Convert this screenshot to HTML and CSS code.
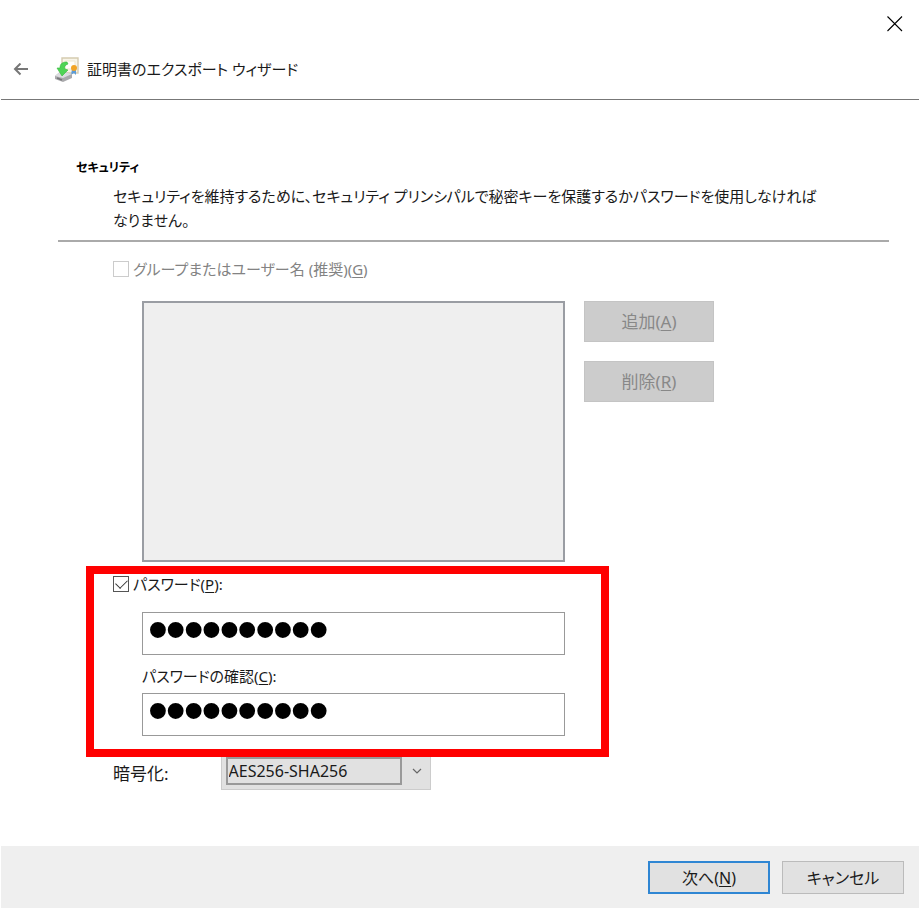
FILE: index.html
```html
<!DOCTYPE html>
<html lang="ja">
<head>
    <meta charset="UTF-8">
    <meta name="viewport" content="width=device-width, initial-scale=1.0">
    <title>証明書のエクスポート ウィザード</title>
    <link rel="stylesheet" href="styles.css">
</head>
<body>
    <div class="wizard">
        <header class="header">
            <div class="titleBar">
                <button type="button" class="closeButton" aria-label="閉じる">
                    <svg width="16" height="16" viewBox="0 0 16 16"><path d="M.5 .5L15 15M15 .5L.5 15" fill="none" stroke="#000" stroke-width="1.1"/></svg>
                </button>
            </div>
            <div class="caption">
                <button type="button" class="backButton" aria-label="戻る">
                    <svg width="16" height="14" viewBox="0 0 16 14"><path d="M15 6H2M7.5 .5L2 6L7.5 11.5" fill="none" stroke="#777" stroke-width="2"/></svg>
                </button>
                <!-- 証明書アイコン -->
                <svg class="icon" width="26" height="26" viewBox="0 0 26 26">
                    <path d="M8 1H24V16H8Z" fill="#f8f5e9" stroke="#d5cbb0" stroke-width="1.4"/>
                    <path d="M11 4H21V12H11Z" fill="#fffefa" stroke="#eee7d2"/>
                    <path d="M18 12L17 18L20 16L22 18L22 12Z" fill="#5b9bd8"/>
                    <circle cx="20" cy="11" r="3" fill="#f2a425"/>
                    <path d="M1 19L7 14L18 17L18 21L9 25L1 22Z" fill="#a9a9ac"/>
                    <path d="M1 19L7 14L18 17L9 21Z" fill="#dcdcdf"/>
                    <path d="M3 21L8 23" stroke="#77777a" stroke-width="1.5"/>
                    <path d="M13 5C8 5 6 7 6 11L3 11L8 19L14 13L11 12C10 10 11 8 14 7Z" fill="#4fd455" stroke="#35b83d" stroke-width=".6"/>
                </svg>
                <h1 class="title">証明書のエクスポート ウィザード</h1>
            </div>
        </header>

        <main class="content">
            <div class="intro">
                <h2>セキュリティ</h2>
                <p>セキュリティを維持するために、セキュリティ プリンシパルで秘密キーを保護するかパスワードを使用しなければ<br>なりません。</p>
            </div>

            <form class="form" id="exportForm">
                <div class="checkRow disabled">
                    <input type="checkbox" id="useGroup" disabled>
                    <label for="useGroup">グループまたはユーザー名 (推奨)(<u>G</u>)</label>
                </div>
                <div class="groupArea">
                    <select class="groupList" size="8" aria-label="グループまたはユーザー名" disabled></select>
                    <div class="groupButtons">
                        <button type="button" disabled>追加(<u>A</u>)</button>
                        <button type="button" disabled>削除(<u>R</u>)</button>
                    </div>
                </div>

                <div class="passwordArea">
                    <div class="checkRow">
                        <input type="checkbox" id="usePassword" checked>
                        <label for="usePassword">パスワード(<u>P</u>):</label>
                    </div>
                    <div class="fields">
                        <input type="password" class="password" aria-label="パスワード" value="0123456789">
                        <label for="confirm">パスワードの確認(<u>C</u>):</label>
                        <input type="password" class="password" id="confirm" value="0123456789">
                    </div>
                </div>

                <div class="cipherRow">
                    <label for="cipher">暗号化:</label>
                    <div class="selectBox">
                        <select id="cipher">
                            <option>AES256-SHA256</option>
                            <option>TripleDES-SHA1</option>
                        </select>
                        <svg class="arrow" width="10" height="6" viewBox="0 0 10 6"><path d="M1 1L5 5L9 1" fill="none" stroke="#666" stroke-width="1.2"/></svg>
                    </div>
                </div>
            </form>
        </main>

        <footer class="footer">
            <button type="submit" form="exportForm" class="next">次へ(<u>N</u>)</button>
            <button type="button">キャンセル</button>
        </footer>
    </div>
</body>
</html>
```
FILE: styles.css
```css
* {
    box-sizing: border-box;
}

body {
    margin: 0;
    background-color: #fff;
    color: #1a1a1a;
    font-family: "Noto Sans", "Noto Sans CJK JP", sans-serif;
    font-size: 15px;
    line-height: 24px;
    font-feature-settings: "palt";
}

button, input, select {
    font: inherit;
    color: inherit;
    font-feature-settings: inherit;
    margin: 0;
}

u {
    text-underline-offset: 2px;
    text-decoration-thickness: 1px;
}

.wizard {
    display: flex;
    flex-direction: column;
    min-height: 100vh;
    padding: 0 1px 1px;
}

.header {
    border-bottom: 1px solid #777;
}

.titleBar {
    display: flex;
    justify-content: flex-end;
    padding: 16px 16px 0;
}

.closeButton, .backButton {
    display: flex;
    padding: 0;
    border: none;
    background: none;
}

.caption {
    display: flex;
    align-items: center;
    padding: 24px 12px 16px;
}

.icon {
    margin: 0 7px 0 25px;
}

.title {
    margin: 0;
    font-size: 15px;
    font-weight: 400;
    line-height: 27px;
}

.content {
    flex: 1;
    padding: 56px 30px 0 57px;
}

.intro {
    padding: 0 18px 8px;
    border-bottom: 2px solid #aaa;
}

.intro h2 {
    margin: 0 0 4px;
    font-size: 12px;
    font-weight: 700;
    color: #000;
}

.intro p {
    margin: 0 0 0 37px;
}

.form {
    padding: 15px 0 0 55px;
}

.checkRow {
    display: flex;
    align-items: center;
    gap: 4px;
}

.checkRow input {
    appearance: none;
    display: grid;
    place-items: center;
    width: 16px;
    height: 16px;
    border: 1px solid #555;
    background-color: #fff;
}

.checkRow input:checked::before {
    content: "";
    width: 10px;
    height: 6px;
    margin-bottom: 3px;
    border: solid #333;
    border-width: 0 0 1px 1px;
    transform: rotate(-45deg);
}

.disabled {
    color: #838383;
}

.disabled input {
    border-color: #ccc;
}

.groupArea {
    display: flex;
    gap: 19px;
    padding: 20px 0 0 29px;
}

.groupList {
    width: 423px;
    height: 261px;
    border: 2px solid #9a9da3;
    border-radius: 0;
    background-color: #efefef;
    opacity: 1;
}

.groupButtons {
    display: flex;
    flex-direction: column;
    gap: 19px;
}

.groupButtons button {
    width: 130px;
    height: 41px;
    border: 1px solid #c4c4c4;
    background-color: #ccc;
    color: #888;
    font-size: 17px;
}

/* 赤枠 */
.passwordArea {
    position: relative;
    padding: 10px 0 21px;
    width: 452px;
}

.passwordArea::after {
    content: "";
    position: absolute;
    top: 4px;
    right: -44px;
    bottom: 0;
    left: -27px;
    border: 8px solid #f00;
    pointer-events: none;
    z-index: 1;
}

.fields {
    display: flex;
    flex-direction: column;
    padding: 16px 0 0 29px;
}

.fields label {
    margin: 9px 0 5px;
}

.password {
    height: 43px;
    padding: 0 6px 8px;
    border: 1px solid #999;
    background-color: #fff;
    color: #000;
    font-family: "Liberation Sans", sans-serif;
    font-size: 51px;
    -webkit-text-stroke: 2px #000;
}

.cipherRow {
    display: flex;
    align-items: center;
    gap: 52px;
    font-size: 17px;
}

.selectBox {
    display: flex;
    align-items: center;
    gap: 10px;
    padding: 0 8px 4px 4px;
    border: 1px solid #ccc;
    border-top: none;
    background-color: #e1e1e1;
}

.selectBox select {
    appearance: none;
    width: 176px;
    height: 28px;
    padding: 0 1px;
    border: 2px solid #999;
    border-radius: 0;
    background: none;
    font-size: 16px;
}

.footer {
    display: flex;
    justify-content: flex-end;
    gap: 12px;
    padding: 15px 15px 14px;
    background-color: #efefef;
}

.footer button {
    width: 122px;
    height: 33px;
    padding: 0;
    border: 1px solid #bbb;
    background-color: #e1e1e1;
    font-size: 16px;
}

.footer .next {
    border: 2px solid #2f86d3;
}
```
